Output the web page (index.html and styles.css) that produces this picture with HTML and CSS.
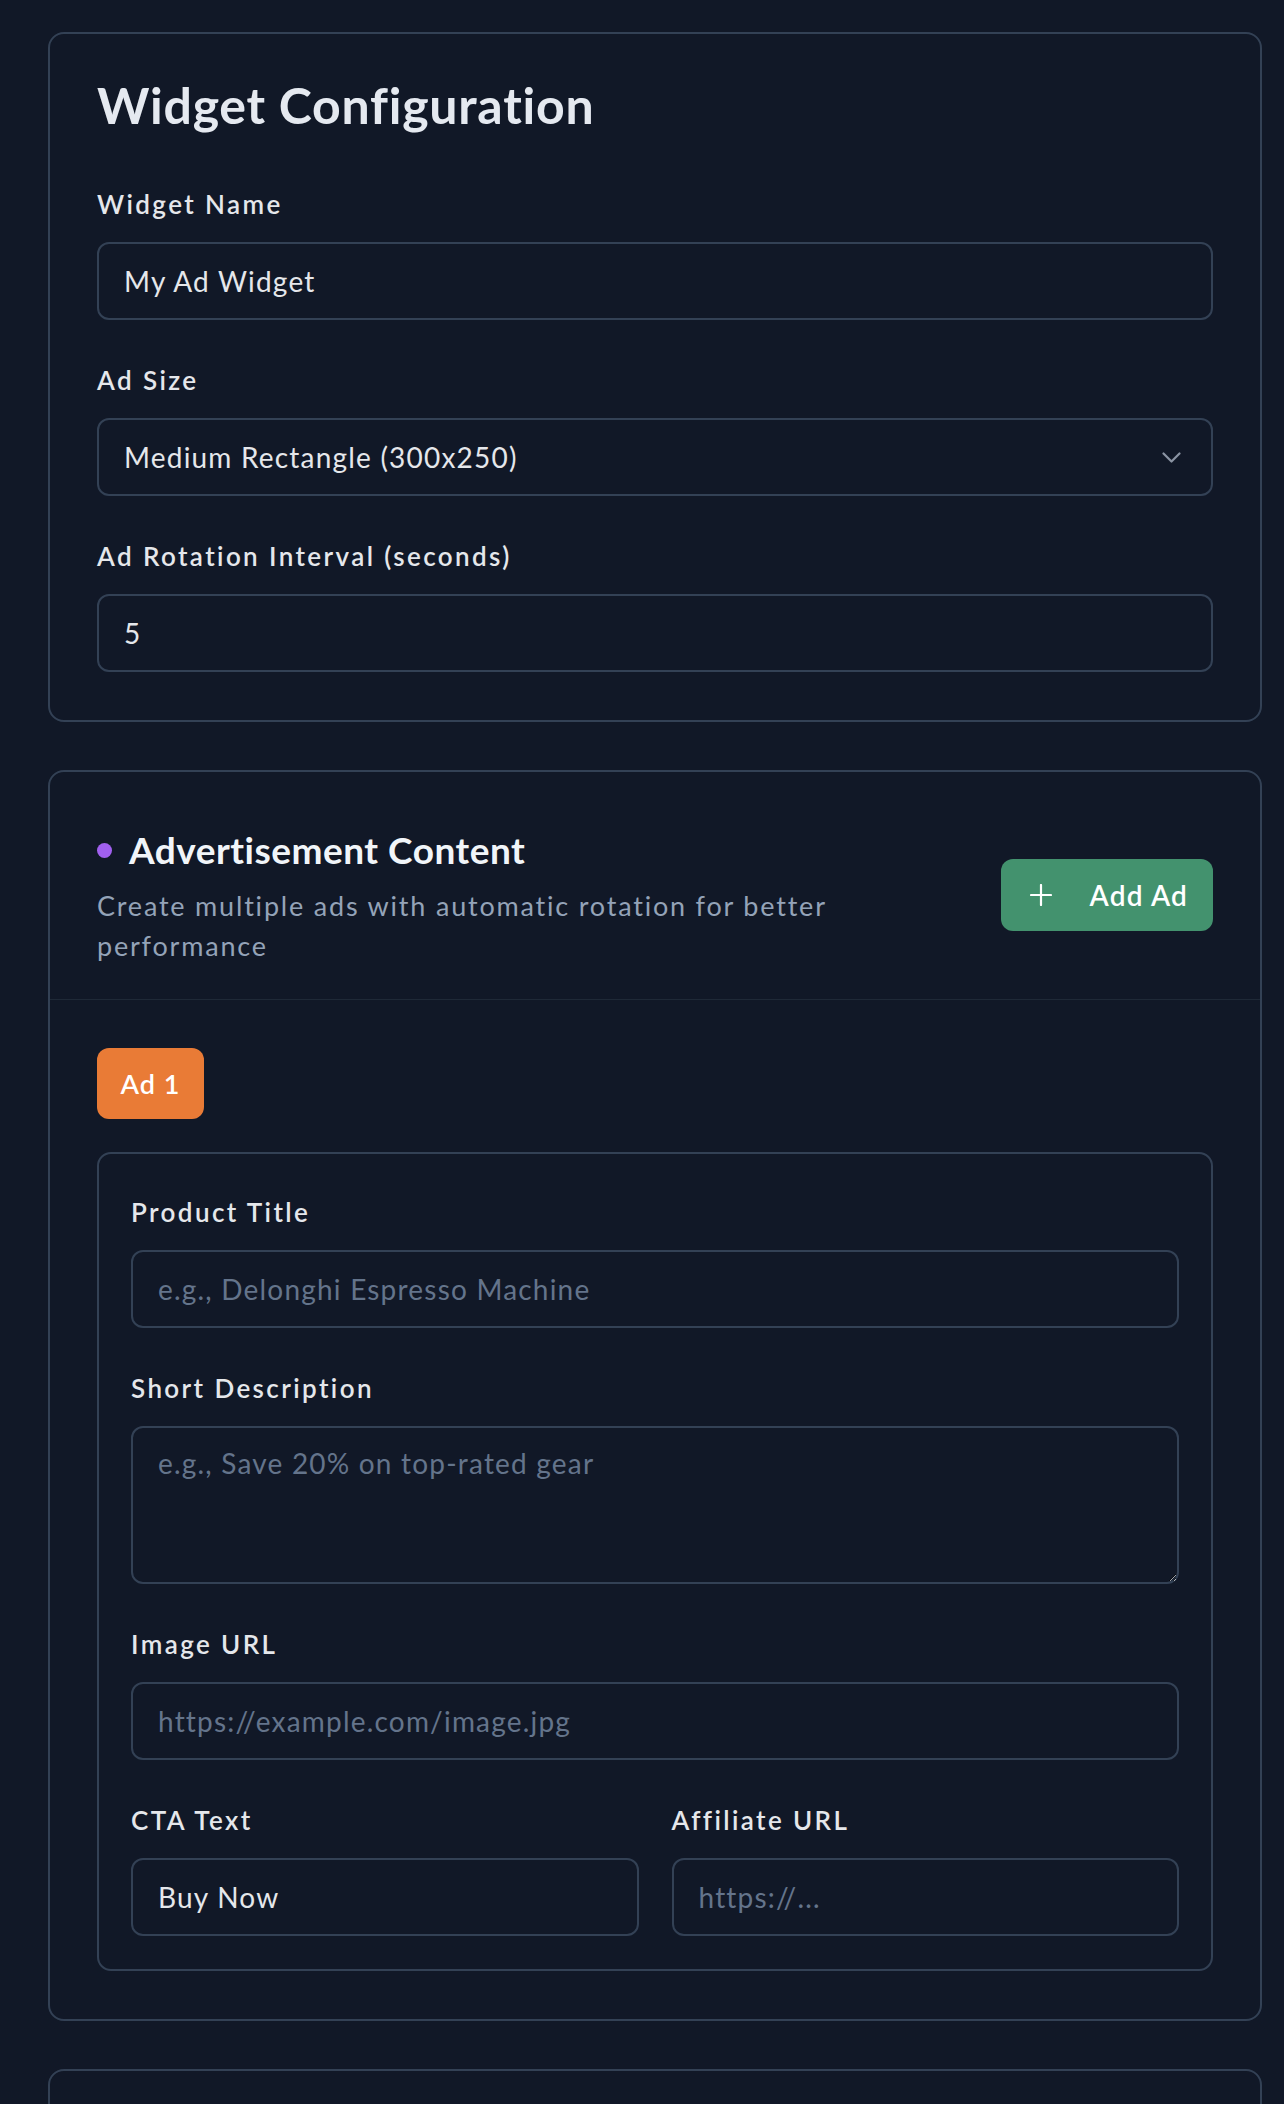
FILE: index.html
```html
<!DOCTYPE html>
<html lang="en">
<head>
<meta charset="utf-8">
<title>Widget Configuration</title>
<link rel="stylesheet" href="styles.css">
</head>
<body>
<main class="page">
  <section class="card card-config">
    <h1 class="card-title">Widget Configuration</h1>
    <div class="field">
      <label class="label" for="wname">Widget Name</label>
      <input class="input" id="wname" type="text" value="My Ad Widget">
    </div>
    <div class="field">
      <label class="label" for="wsize">Ad Size</label>
      <div class="select-wrap">
        <select class="input select" id="wsize">
          <option>Medium Rectangle (300x250)</option>
        </select>
        <svg class="chevron" width="19" height="11" viewBox="0 0 19 11" aria-hidden="true"><path d="M1.5 1.5 L9.5 9.5 L17.5 1.5" fill="none" stroke="#8b94a3" stroke-width="2.2" stroke-linecap="round" stroke-linejoin="round"/></svg>
      </div>
    </div>
    <div class="field">
      <label class="label" for="winterval">Ad Rotation Interval (seconds)</label>
      <input class="input" id="winterval" type="text" value="5">
    </div>
  </section>

  <section class="card card-ads">
    <header class="ads-header">
      <div class="ads-heading">
        <h2 class="ads-title"><span class="dot"></span>Advertisement Content</h2>
        <p class="ads-sub">Create multiple ads with automatic rotation for better performance</p>
      </div>
      <button class="btn-add" type="button">
        <svg width="22" height="22" viewBox="0 0 22 22" aria-hidden="true"><path d="M11 1 V21 M1 11 H21" stroke="#ffffff" stroke-width="2.2" stroke-linecap="round"/></svg>
        <span>Add Ad</span>
      </button>
    </header>
    <div class="ads-body">
      <div class="tabs"><span class="tab">Ad 1</span></div>
      <div class="ad-card">
        <div class="field">
          <label class="label" for="ptitle">Product Title</label>
          <input class="input" id="ptitle" type="text" placeholder="e.g., Delonghi Espresso Machine">
        </div>
        <div class="field">
          <label class="label" for="pdesc">Short Description</label>
          <textarea class="input textarea" id="pdesc" placeholder="e.g., Save 20% on top-rated gear"></textarea>
        </div>
        <div class="field">
          <label class="label" for="pimg">Image URL</label>
          <input class="input" id="pimg" type="text" placeholder="https://example.com/image.jpg">
        </div>
        <div class="field-row">
          <div class="field">
            <label class="label" for="pcta">CTA Text</label>
            <input class="input" id="pcta" type="text" value="Buy Now">
          </div>
          <div class="field">
            <label class="label" for="paff">Affiliate URL</label>
            <input class="input" id="paff" type="text" placeholder="https://...">
          </div>
        </div>
      </div>
    </div>
  </section>

  <section class="card card-next"></section>
</main>
</body>
</html>
```

FILE: styles.css
```css
* { box-sizing: border-box; }

html, body {
  margin: 0;
  padding: 0;
  background: #111827;
  color-scheme: dark;
}

body {
  font-family: "Lato", "Noto Sans", sans-serif;
  color: #e5e7eb;
}

.page {
  width: 1214px;
  margin-left: 48px;
  padding-top: 32px;
  display: flex;
  flex-direction: column;
  gap: 48px;
}

.card {
  border: 2px solid #334155;
  border-radius: 16px;
  background: #111827;
}

.card-config {
  padding: 41px 47px 48px;
  display: flex;
  flex-direction: column;
  gap: 42px;
}

.card-title {
  margin: 0 0 9px;
  font-size: 50px;
  line-height: 60px;
  font-weight: 700;
  letter-spacing: 0.75px;
  color: #e5e9f0;
}

.field {
  display: flex;
  flex-direction: column;
  gap: 20px;
}

.label {
  font-size: 26px;
  line-height: 36px;
  font-weight: 600;
  letter-spacing: 2.4px;
  color: #e5e7eb;
}

.input {
  display: block;
  width: 100%;
  height: 78px;
  margin: 0;
  padding: 0 25px;
  border: 2px solid #334155;
  border-radius: 12px;
  background: #111827;
  color: #e5e7eb;
  font-family: inherit;
  font-size: 28px;
  letter-spacing: 1.2px;
  outline: none;
}

.input::placeholder { color: #64748b; opacity: 1; }

.select-wrap { position: relative; }

.select {
  appearance: none;
  -webkit-appearance: none;
}

.chevron {
  position: absolute;
  right: 32px;
  top: 34px;
  pointer-events: none;
}

.textarea {
  height: 158px;
  padding-top: 15px;
  resize: vertical;
  line-height: 40px;
}

.card-ads { display: flex; flex-direction: column; }

.ads-header {
  display: flex;
  align-items: center;
  justify-content: space-between;
  padding: 54px 47px 33px;
  border-bottom: 1px solid #1f2937;
}

.ads-heading { max-width: 840px; }

.ads-title {
  margin: 0 0 12px;
  display: flex;
  align-items: center;
  gap: 17px;
  font-size: 37px;
  line-height: 48px;
  font-weight: 700;
  letter-spacing: 0.5px;
  color: #f1f5f9;
}

.dot {
  width: 15px;
  height: 15px;
  border-radius: 50%;
  background: #a160ef;
  flex: none;
}

.ads-sub {
  margin: 0;
  font-size: 27px;
  line-height: 40px;
  letter-spacing: 1.8px;
  color: #94a3b8;
}

.btn-add {
  display: flex;
  align-items: center;
  gap: 38px;
  height: 72px;
  margin-top: -3px;
  padding: 0 25px 0 29px;
  border: none;
  border-radius: 12px;
  background: #43926e;
  color: #ffffff;
  font-family: inherit;
  font-size: 28px;
  font-weight: 600;
  letter-spacing: 1.2px;
  flex: none;
}

.ads-body {
  padding: 48px 47px 48px;
  display: flex;
  flex-direction: column;
  gap: 33px;
}

.tabs { display: flex; }

.tab {
  display: flex;
  align-items: center;
  justify-content: center;
  width: 107px;
  height: 71px;
  border-radius: 12px;
  background: #e97b36;
  color: #ffffff;
  font-size: 27px;
  font-weight: 600;
  letter-spacing: 1px;
}

.ad-card {
  border: 2px solid #334155;
  border-radius: 14px;
  padding: 40px 32px 33px;
  display: flex;
  flex-direction: column;
  gap: 42px;
}

.field-row {
  display: grid;
  grid-template-columns: 1fr 1fr;
  gap: 33px;
}

.card-next { height: 240px; }
```
